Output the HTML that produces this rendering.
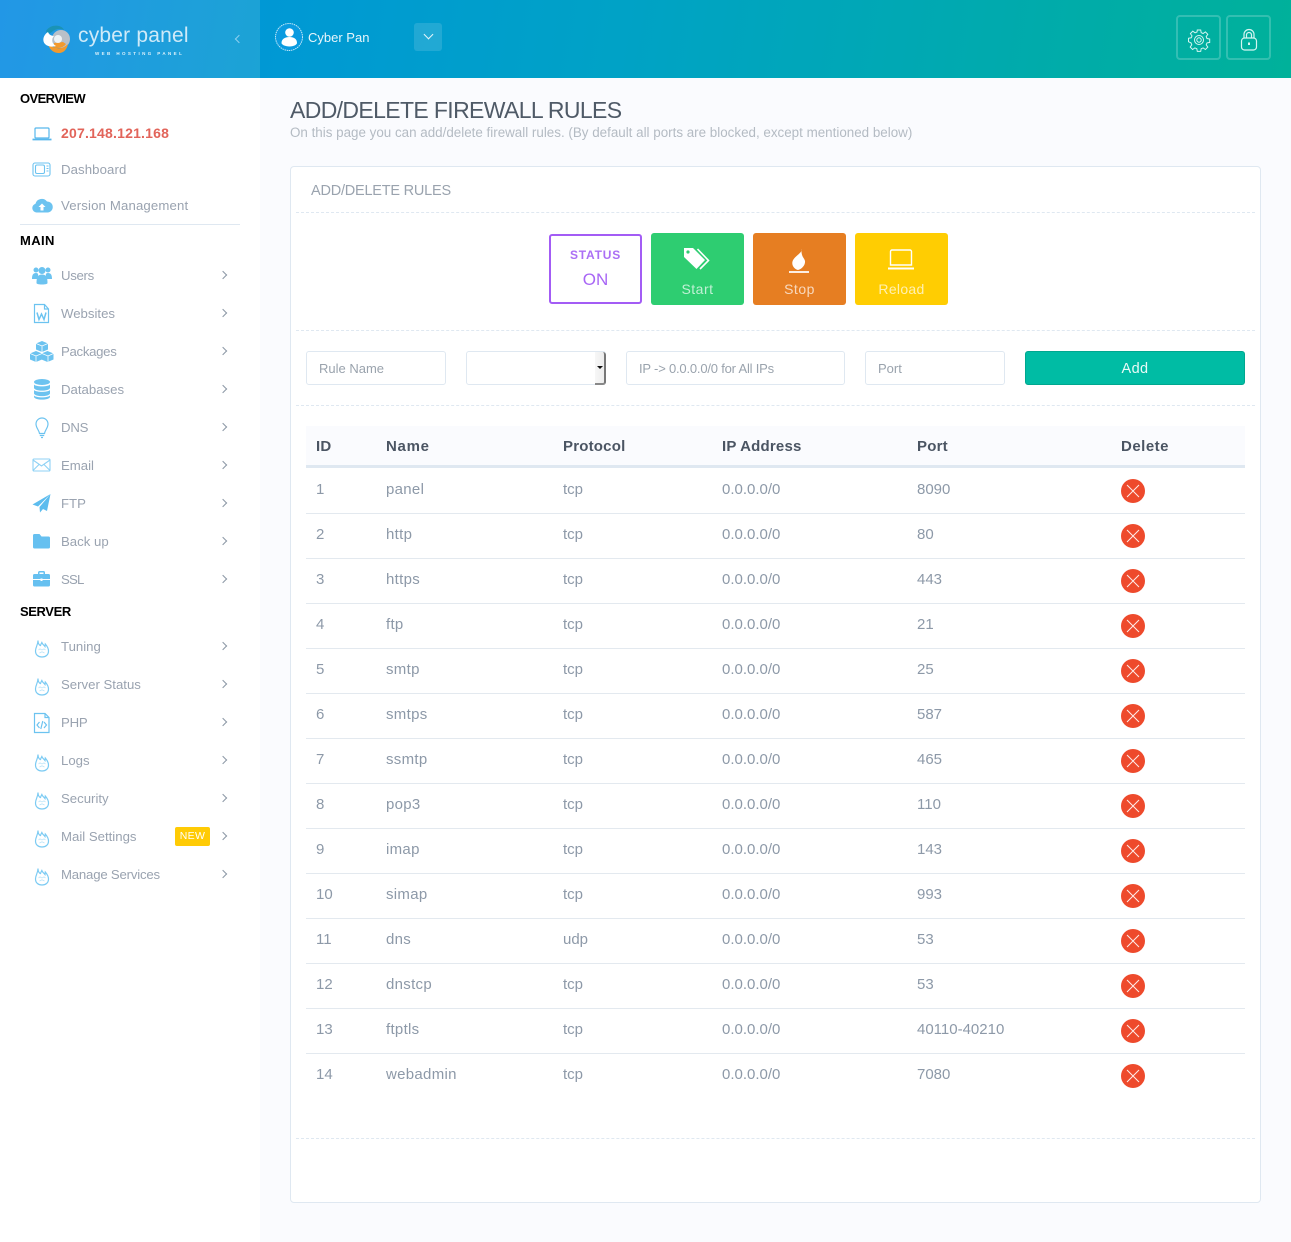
<!DOCTYPE html>
<html><head><meta charset="utf-8"><style>
*{box-sizing:border-box}
html,body{margin:0;padding:0}
body{width:1291px;height:1242px;position:relative;overflow:hidden;background:#fafbfe;font-family:"Liberation Sans",sans-serif;color:#8f9aa8}
.a,.t,.s,.h,.c,.x,.ch,svg.i{position:absolute}
.t{white-space:nowrap;line-height:20px}
.s{left:61px;font-size:13.2px;color:#9aa3b0;white-space:nowrap;line-height:22px;margin-top:1px}
.h{left:20px;font-size:13px;font-weight:bold;letter-spacing:-.6px;color:#000;line-height:20px;margin-top:1px}
.ch{left:220px;width:6px;height:6px;border-top:1px solid #8b97a5;border-right:1px solid #8b97a5;transform:rotate(45deg)}
svg.i{left:30px;width:24px;height:24px}
.c{font-size:15px;color:#8d99a8;line-height:20px;white-space:nowrap;margin-top:1px}
.c[style*="left:386px"]{letter-spacing:.3px}
.th{font-size:15px;font-weight:bold;letter-spacing:.2px;color:#4b5563;line-height:20px;top:437px;position:absolute}
.l{position:absolute;left:306px;width:939px;height:1px;background:#e3e9ef}
.d{position:absolute;left:296px;width:959px;height:0;border-top:1px dashed #dfe8f1}
.x{left:1121px;width:24px;height:24px}
.in{position:absolute;top:351px;height:34px;background:#fff;border:1px solid #dfe8f1;border-radius:3px;font-size:13px;color:#9aa3ad;line-height:33px;padding-left:12px;white-space:nowrap}
.b{position:absolute;top:233px;width:93px;height:72px;border-radius:3px;text-align:center;color:rgba(255,255,255,.7);font-size:14px;letter-spacing:.5px}
.b span{position:absolute;left:0;right:0;top:46px;line-height:20px}
.b svg{position:absolute;left:28px;top:12px;width:36px;height:30px}
</style></head><body>
<svg width="0" height="0" style="position:absolute"><defs>
<symbol id="fire" viewBox="0 0 24 24"><path d="M8 5.500C8 8 9 10 10.500 10.500 10.800 9.500 11.200 8.500 11.800 7.500 12.500 9.500 14 10 15 11.500L15.300 9C17 11 18.500 13 18.500 16 18.500 20 15.500 22 12 22 8.500 22 5.500 20 5.500 16 5.500 12 8 10 8 5.500z" fill="none" stroke="#7ccbf3" stroke-width="1.200"/><path d="M8.500 15l1.500-1.200 2 1.200 2-1.200 1.500 1.200M9.500 18l2.500-1.200 2.500 1.200" fill="none" stroke="#b5e2f8" stroke-width=".7"/></symbol>
<symbol id="del" viewBox="0 0 24 24"><circle cx="12" cy="12" r="12" fill="#ee4a2c"/><path d="M6 6l12 12M18 6L6 18" stroke="#fff" stroke-width="1" opacity=".9"/></symbol>
</defs></svg>

<div class="a" style="left:0;top:0;width:260px;height:78px;background:linear-gradient(100deg,#2297e6,#1ca3d5)"></div>
<div class="a" style="left:260px;top:0;width:1031px;height:78px;background:linear-gradient(100deg,#0098d5 0%,#00a2c6 35%,#00abab 75%,#00b19a 100%)"></div>

<svg class="a" style="left:41px;top:25px" width="32" height="30" viewBox="0 0 32 30"><circle cx="20" cy="14" r="9" fill="#b9c0c8"/><path d="M7 19C9 26 14 28 18 28 23 28 26 24 27 19 24 22 20 24 16 23 12 22 9 21 7 19z" fill="#f29a2e"/><path d="M13 22c4 2 9 1 12-3l-3-2-9 1z" fill="#f29a2e"/><path d="M5 6C8 1 14 0 18 1 21 2 22 3 23 5 19 3 15 4 12 6 10 8 8 9 6 8z" fill="#1a93b5"/><path d="M7 7C2 10 1 16 4 19 7 22 12 22 15 21 11 19 10 14 13 11 11 11 8 10 7 7z" fill="#fff"/><circle cx="17" cy="14" r="4" fill="#eef3f6"/></svg>
<div class="t" style="left:78px;top:21px;font-size:21px;line-height:30px;color:#cfeaf8;letter-spacing:.2px">cyber panel</div>
<div class="t" style="left:95px;top:50px;font-size:4.500px;line-height:7px;color:#dff2fb;letter-spacing:2.400px;font-weight:bold">WEB HOSTING PANEL</div>
<div class="a" style="left:236px;top:36px;width:6px;height:6px;border-left:1px solid #8fd0ef;border-bottom:1px solid #8fd0ef;transform:rotate(45deg)"></div>

<svg class="a" style="left:275px;top:23px" width="28" height="28" viewBox="0 0 28 28"><circle cx="14" cy="14" r="13.500" fill="#0a9be0" stroke="#bfe6f8" stroke-width="1" stroke-dasharray="1.500 .7"/><circle cx="14.500" cy="9.500" r="4.300" fill="#fff"/><path d="M6.500 20c0-4 3.500-6 8-6s7.500 2 7.500 6c0 1.500-3 3.500-7.500 3.500S6.500 21.500 6.500 20z" fill="#fff"/></svg>
<div class="t" style="left:308px;top:28px;font-size:13px;color:#e6f5fb">Cyber Pan</div>
<div class="a" style="left:414px;top:23px;width:28px;height:28px;border-radius:3px;background:rgba(255,255,255,.13)"></div>
<div class="a" style="left:425px;top:31px;width:7px;height:7px;border-right:1.300px solid #e6f5fb;border-bottom:1.300px solid #e6f5fb;transform:rotate(45deg)"></div>

<div class="a" style="left:1176px;top:15px;width:45px;height:45px;border:2px solid rgba(255,255,255,.2);border-radius:4px"></div>
<div class="a" style="left:1226px;top:15px;width:45px;height:45px;border:2px solid rgba(255,255,255,.2);border-radius:4px"></div>
<svg class="a" style="left:1187px;top:28px" width="24" height="24" viewBox="0 0 24 24" fill="none" stroke="#d5f5f1" stroke-width="1"><path d="M10.300 2h3.400l.5 2.700 1.900.8 2.300-1.600 2.400 2.400-1.600 2.300.8 1.900 2.700.5v3.400l-2.700.5-.8 1.900 1.600 2.300-2.400 2.400-2.300-1.600-1.900.8-.5 2.700h-3.400l-.5-2.700-1.900-.8-2.300 1.600-2.400-2.400 1.600-2.300-.8-1.900L1.500 13.700v-3.400l2.700-.5.8-1.900-1.600-2.300 2.400-2.400 2.300 1.600 1.900-.8z"/><circle cx="12" cy="12" r="4.500"/><circle cx="12" cy="12" r="2.200"/></svg>
<svg class="a" style="left:1237px;top:28px" width="24" height="24" viewBox="0 0 24 24" fill="none" stroke="#d5f5f1" stroke-width="1.200"><rect x="4.500" y="10" width="15" height="12" rx="3"/><path d="M7 10V6.500a5 5 0 0 1 10 0V10M9.500 10V7a2.500 2.500 0 0 1 5 0v3"/><path d="M12 14.500v2.500" stroke-width="2"/></svg>

<div class="a" style="left:0;top:78px;width:260px;height:1164px;background:#fff"></div>
<div class="h" style="top:88px">OVERVIEW</div>
<svg class="i" style="top:121px" viewBox="0 0 24 24" fill="none" stroke="#57b7ec" stroke-width="1.200"><rect x="5" y="7" width="14" height="10" rx="1"/><path d="M2.500 18.500h19" stroke-width="1.800"/></svg>
<div class="s" style="top:121px;color:#e2645a;font-weight:bold;font-size:14px;letter-spacing:.2px">207.148.121.168</div>
<svg class="i" style="top:157px" viewBox="0 0 24 24" fill="none" stroke="#6cc3f0" stroke-width="1.100"><rect x="3" y="6" width="17" height="13" rx="2"/><rect x="5.500" y="8" width="9" height="8.500" rx="1.500"/><path d="M16.500 9h2M16.500 11.500h2M16.500 14h2"/></svg>
<div class="s" style="top:158px;letter-spacing:.1px">Dashboard</div>
<svg class="i" style="top:193px" viewBox="0 0 24 24"><path d="M6.500 19.500a4.500 4.500 0 0 1-1-8.800A6.500 6.500 0 0 1 17 8.500a5.500 5.500 0 0 1 .5 11z" fill="#6cc3f0"/><path d="M12 10.500l3.500 3.500h-2v3.500h-3V14h-2z" fill="#fff"/></svg>
<div class="s" style="top:194px;letter-spacing:.15px">Version Management</div>
<div class="a" style="left:20px;top:224px;width:220px;height:1px;background:#dfe8f1"></div>

<div class="h" style="top:230px;letter-spacing:.4px">MAIN</div>
<svg class="i" style="top:263px" viewBox="0 0 24 24" fill="#6cc3f0"><circle cx="6" cy="7" r="2.500"/><circle cx="18" cy="7" r="2.500"/><circle cx="12" cy="7.500" r="3.500"/><path d="M2 16c0-4 1-6 4-6s2 2 2 6zM22 16c0-4-1-6-4-6s-2 2-2 6z"/><path d="M6.500 20c0-6 1.500-8.500 5.500-8.500S17.500 14 17.500 20c0 1-2 1.500-5.500 1.500S6.500 21 6.500 20z"/></svg>
<div class="s" style="top:264px;letter-spacing:-.3px">Users</div><div class="ch" style="top:272px"></div>
<svg class="i" style="top:301px" viewBox="0 0 24 24" fill="none" stroke="#6cc3f0" stroke-width="1.200"><path d="M4.500 3.500h10l4 4.500v13.500h-14z"/><path d="M14.500 3.500V8h4"/><path d="M7 11.500l2 7 2.500-5.500 2.500 5.500 2-7" stroke-width="1.500"/></svg>
<div class="s" style="top:302px">Websites</div><div class="ch" style="top:310px"></div>
<svg class="i" style="top:340px" viewBox="0 0 24 24" fill="#6cc3f0"><path d="M12 1l6 2.500v6L12 12 6 9.500v-6z"/><path d="M6 11l6 2.500v6L6 22 0 19.500v-6z"/><path d="M18 11l6 2.500v6L18 22l-6-2.500v-6z" transform="translate(-.5)"/><path d="M6 3.500l6 2.500 6-2.500M0 13.500L6 16l6-2.500 6 2.500 5.500-2.500M12 6v6M6 16v6M18 16v6" stroke="#fff" fill="none" stroke-width=".8"/></svg>
<div class="s" style="top:340px;letter-spacing:-.3px">Packages</div><div class="ch" style="top:348px"></div>
<svg class="i" style="top:377px" viewBox="0 0 24 24" fill="#6cc3f0"><ellipse cx="12" cy="5" rx="8" ry="3"/><path d="M4 7.500c2 2.500 14 2.500 16 0v3.500c-1 3.500-15 3.500-16 0zM4 13c2 2.500 14 2.500 16 0v3.500c-1 3.500-15 3.500-16 0zM4 18.500c2 2.500 14 2.500 16 0V20c-1 3.500-15 3.500-16 0z"/></svg>
<div class="s" style="top:378px">Databases</div><div class="ch" style="top:386px"></div>
<svg class="i" style="top:415px" viewBox="0 0 24 24" fill="none" stroke="#6cc3f0" stroke-width="1.200"><path d="M9.500 18.500C9 15 6 13 6 9a6 6 0 0 1 12 0c0 4-3 6-3.500 9.500z"/><path d="M9.800 20.500h4.400M11 22.500h2"/></svg>
<div class="s" style="top:416px;letter-spacing:-.2px">DNS</div><div class="ch" style="top:424px"></div>
<svg class="i" style="top:453px" viewBox="0 0 24 24" fill="none" stroke="#8fd2f5" stroke-width="1.100"><rect x="3" y="6" width="17" height="12" rx="1"/><path d="M3 7l8.500 6L20 7M3 17.500l6-6M20 17.500l-6-6"/></svg>
<div class="s" style="top:454px">Email</div><div class="ch" style="top:462px"></div>
<svg class="i" style="top:491px" viewBox="0 0 24 24" fill="#5cbcee"><path d="M20.500 3L2.500 13.500l5.500 2z"/><path d="M20.500 3L9.500 16 10 21.500l3-3.500 4 2z"/></svg>
<div class="s" style="top:492px">FTP</div><div class="ch" style="top:500px"></div>
<svg class="i" style="top:529px" viewBox="0 0 24 24" fill="#66c0f0"><path d="M3 6.500a1.500 1.500 0 0 1 1.500-1.500h5l2 2.500h7A1.500 1.500 0 0 1 20 9v9a1.500 1.500 0 0 1-1.500 1.500h-14A1.500 1.500 0 0 1 3 18z"/></svg>
<div class="s" style="top:530px">Back up</div><div class="ch" style="top:538px"></div>
<svg class="i" style="top:567px" viewBox="0 0 24 24"><path d="M3 8.500A1.500 1.500 0 0 1 4.500 7H8V5.500C8 4.500 9 4 9.500 4h4c.8 0 1.500.5 1.500 1.500V7h3.500A1.500 1.500 0 0 1 20 8.500V18a1.500 1.500 0 0 1-1.500 1.500h-14A1.500 1.500 0 0 1 3 18z" fill="#66c0f0"/><path d="M9.500 5.500h4V7h-4z" fill="#fff"/><path d="M3 12.500h17" stroke="#fff"/><rect x="10.500" y="11.500" width="2" height="2.500" fill="#fff"/></svg>
<div class="s" style="top:568px;letter-spacing:-.8px">SSL</div><div class="ch" style="top:576px"></div>

<div class="h" style="top:601px;letter-spacing:-.4px">SERVER</div>
<svg class="i" style="top:635px"><use href="#fire"/></svg>
<div class="s" style="top:635px">Tuning</div><div class="ch" style="top:643px"></div>
<svg class="i" style="top:673px"><use href="#fire"/></svg>
<div class="s" style="top:673px">Server Status</div><div class="ch" style="top:681px"></div>
<svg class="i" style="top:710px" viewBox="0 0 24 24" fill="none" stroke="#6cc3f0" stroke-width="1.200"><path d="M4.500 3.500H15l4 4v15H4.500z"/><path d="M15 3.500v4h4"/><path d="M9.500 12l-2.500 3 2.500 3M14 12l2.500 3-2.500 3M12.800 11l-2 8"/></svg>
<div class="s" style="top:711px;letter-spacing:-.2px">PHP</div><div class="ch" style="top:719px"></div>
<svg class="i" style="top:749px"><use href="#fire"/></svg>
<div class="s" style="top:749px">Logs</div><div class="ch" style="top:757px"></div>
<svg class="i" style="top:787px"><use href="#fire"/></svg>
<div class="s" style="top:787px">Security</div><div class="ch" style="top:795px"></div>
<svg class="i" style="top:825px"><use href="#fire"/></svg>
<div class="s" style="top:825px">Mail Settings</div>
<div class="a" style="left:175px;top:827px;width:35px;height:19px;background:#ffcb05;border-radius:2px;color:#fff;font-size:10.500px;letter-spacing:.3px;line-height:19px;text-align:center">NEW</div>
<div class="ch" style="top:833px"></div>
<svg class="i" style="top:863px"><use href="#fire"/></svg>
<div class="s" style="top:863px;letter-spacing:-.2px">Manage Services</div><div class="ch" style="top:871px"></div>

<div class="t" style="left:290px;top:96px;font-size:23px;line-height:28px;color:#4f5a67;letter-spacing:-.63px">ADD/DELETE FIREWALL RULES</div>
<div class="t" style="left:290px;top:123px;font-size:13.400px;color:#b4bbc3">On this page you can add/delete firewall rules. (By default all ports are blocked, except mentioned below)</div>

<div class="a" style="left:290px;top:166px;width:971px;height:1037px;background:#fff;border:1px solid #dfe8f1;border-radius:4px"></div>
<div class="t" style="left:311px;top:181px;font-size:14.500px;color:#9aa3ae;letter-spacing:-.22px">ADD/DELETE RULES</div>
<div class="d" style="top:212px"></div>

<div class="a" style="left:549px;top:234px;width:93px;height:70px;border:2px solid #a35cf5;border-radius:3px;background:#fff"></div>
<div class="t" style="left:549px;width:93px;text-align:center;top:245px;font-size:12px;font-weight:bold;letter-spacing:.8px;color:#ab6ff5">STATUS</div>
<div class="t" style="left:549px;width:93px;text-align:center;top:270px;font-size:17px;color:#a866f5">ON</div>

<div class="b" style="left:651px;background:#2ecd71"><svg viewBox="0 0 36 30"><path d="M5 3h9l12 12-8.500 9L5 12z" fill="#fff"/><circle cx="9" cy="7" r="1.600" fill="#2ecd71"/><path d="M18.500 4l11 11.500L21 24" fill="none" stroke="#fff" stroke-width="1.600"/></svg><span>Start</span></div>
<div class="b" style="left:753px;background:#e67e22"><svg viewBox="0 0 36 30"><path d="M20.500 4C22 8 13 11 11.500 16.500 10.500 20 13 24 17 25 21 24 24.500 20 24 16 23.500 13 20 12 20.500 4z" fill="#fff"/><path d="M8 27h20" stroke="#fff" stroke-width="1.800"/></svg><span>Stop</span></div>
<div class="b" style="left:855px;background:#ffcd02;letter-spacing:.3px"><svg viewBox="0 0 36 30"><path d="M9 5h18a1.500 1.500 0 0 1 1.500 1.500V20h-21V6.500A1.500 1.500 0 0 1 9 5z" fill="none" stroke="#fff" stroke-width="1.400"/><path d="M5 23.500h26" stroke="#fff" stroke-width="2"/></svg><span>Reload</span></div>
<div class="d" style="top:330px"></div>

<div class="in" style="left:306px;width:140px">Rule Name</div>
<div class="in" style="left:466px;width:140px;padding:0"></div>
<div class="a" style="left:595px;top:352px;width:11px;height:33px;background:linear-gradient(90deg,#f7f7f7,#ececec);border-right:2px solid #777;border-bottom:2px solid #888;border-radius:0 3px 3px 0"></div>
<div class="a" style="left:597px;top:366px;width:0;height:0;border-left:3px solid transparent;border-right:3px solid transparent;border-top:3px solid #111"></div>
<div class="in" style="left:626px;width:219px;letter-spacing:-.2px">IP -&gt; 0.0.0.0/0 for All IPs</div>
<div class="in" style="left:865px;width:140px">Port</div>
<div class="a" style="left:1025px;top:351px;width:220px;height:34px;background:#00bca4;border:1px solid #00a78f;border-radius:3px;color:#e8faf7;font-size:14.500px;letter-spacing:.4px;line-height:35px;text-align:center">Add</div>
<div class="d" style="top:405px"></div>

<div class="a" style="left:306px;top:426px;width:939px;height:39px;background:#fafbfe"></div>
<div class="a" style="left:306px;top:465px;width:939px;height:3px;background:#dfe8f1"></div>
<div class="th" style="left:316px">ID</div><div class="th" style="left:386px;letter-spacing:.7px">Name</div><div class="th" style="left:563px">Protocol</div><div class="th" style="left:722px">IP Address</div><div class="th" style="left:917px">Port</div><div class="th" style="left:1121px;letter-spacing:.5px">Delete</div>

<div class="c" style="left:316px;top:479px">1</div><div class="c" style="left:386px;top:479px">panel</div><div class="c" style="left:563px;top:479px">tcp</div><div class="c" style="left:722px;top:479px">0.0.0.0/0</div><div class="c" style="left:917px;top:479px">8090</div><svg class="x" style="top:479px"><use href="#del"/></svg><div class="l" style="top:513px"></div>
<div class="c" style="left:316px;top:524px">2</div><div class="c" style="left:386px;top:524px">http</div><div class="c" style="left:563px;top:524px">tcp</div><div class="c" style="left:722px;top:524px">0.0.0.0/0</div><div class="c" style="left:917px;top:524px">80</div><svg class="x" style="top:524px"><use href="#del"/></svg><div class="l" style="top:558px"></div>
<div class="c" style="left:316px;top:569px">3</div><div class="c" style="left:386px;top:569px">https</div><div class="c" style="left:563px;top:569px">tcp</div><div class="c" style="left:722px;top:569px">0.0.0.0/0</div><div class="c" style="left:917px;top:569px">443</div><svg class="x" style="top:569px"><use href="#del"/></svg><div class="l" style="top:603px"></div>
<div class="c" style="left:316px;top:614px">4</div><div class="c" style="left:386px;top:614px">ftp</div><div class="c" style="left:563px;top:614px">tcp</div><div class="c" style="left:722px;top:614px">0.0.0.0/0</div><div class="c" style="left:917px;top:614px">21</div><svg class="x" style="top:614px"><use href="#del"/></svg><div class="l" style="top:648px"></div>
<div class="c" style="left:316px;top:659px">5</div><div class="c" style="left:386px;top:659px">smtp</div><div class="c" style="left:563px;top:659px">tcp</div><div class="c" style="left:722px;top:659px">0.0.0.0/0</div><div class="c" style="left:917px;top:659px">25</div><svg class="x" style="top:659px"><use href="#del"/></svg><div class="l" style="top:693px"></div>
<div class="c" style="left:316px;top:704px">6</div><div class="c" style="left:386px;top:704px">smtps</div><div class="c" style="left:563px;top:704px">tcp</div><div class="c" style="left:722px;top:704px">0.0.0.0/0</div><div class="c" style="left:917px;top:704px">587</div><svg class="x" style="top:704px"><use href="#del"/></svg><div class="l" style="top:738px"></div>
<div class="c" style="left:316px;top:749px">7</div><div class="c" style="left:386px;top:749px">ssmtp</div><div class="c" style="left:563px;top:749px">tcp</div><div class="c" style="left:722px;top:749px">0.0.0.0/0</div><div class="c" style="left:917px;top:749px">465</div><svg class="x" style="top:749px"><use href="#del"/></svg><div class="l" style="top:783px"></div>
<div class="c" style="left:316px;top:794px">8</div><div class="c" style="left:386px;top:794px">pop3</div><div class="c" style="left:563px;top:794px">tcp</div><div class="c" style="left:722px;top:794px">0.0.0.0/0</div><div class="c" style="left:917px;top:794px">110</div><svg class="x" style="top:794px"><use href="#del"/></svg><div class="l" style="top:828px"></div>
<div class="c" style="left:316px;top:839px">9</div><div class="c" style="left:386px;top:839px">imap</div><div class="c" style="left:563px;top:839px">tcp</div><div class="c" style="left:722px;top:839px">0.0.0.0/0</div><div class="c" style="left:917px;top:839px">143</div><svg class="x" style="top:839px"><use href="#del"/></svg><div class="l" style="top:873px"></div>
<div class="c" style="left:316px;top:884px">10</div><div class="c" style="left:386px;top:884px">simap</div><div class="c" style="left:563px;top:884px">tcp</div><div class="c" style="left:722px;top:884px">0.0.0.0/0</div><div class="c" style="left:917px;top:884px">993</div><svg class="x" style="top:884px"><use href="#del"/></svg><div class="l" style="top:918px"></div>
<div class="c" style="left:316px;top:929px">11</div><div class="c" style="left:386px;top:929px">dns</div><div class="c" style="left:563px;top:929px">udp</div><div class="c" style="left:722px;top:929px">0.0.0.0/0</div><div class="c" style="left:917px;top:929px">53</div><svg class="x" style="top:929px"><use href="#del"/></svg><div class="l" style="top:963px"></div>
<div class="c" style="left:316px;top:974px">12</div><div class="c" style="left:386px;top:974px">dnstcp</div><div class="c" style="left:563px;top:974px">tcp</div><div class="c" style="left:722px;top:974px">0.0.0.0/0</div><div class="c" style="left:917px;top:974px">53</div><svg class="x" style="top:974px"><use href="#del"/></svg><div class="l" style="top:1008px"></div>
<div class="c" style="left:316px;top:1019px">13</div><div class="c" style="left:386px;top:1019px">ftptls</div><div class="c" style="left:563px;top:1019px">tcp</div><div class="c" style="left:722px;top:1019px">0.0.0.0/0</div><div class="c" style="left:917px;top:1019px">40110-40210</div><svg class="x" style="top:1019px"><use href="#del"/></svg><div class="l" style="top:1053px"></div>
<div class="c" style="left:316px;top:1064px">14</div><div class="c" style="left:386px;top:1064px">webadmin</div><div class="c" style="left:563px;top:1064px">tcp</div><div class="c" style="left:722px;top:1064px">0.0.0.0/0</div><div class="c" style="left:917px;top:1064px">7080</div><svg class="x" style="top:1064px"><use href="#del"/></svg>
<div class="d" style="top:1138px"></div>
</body></html>
